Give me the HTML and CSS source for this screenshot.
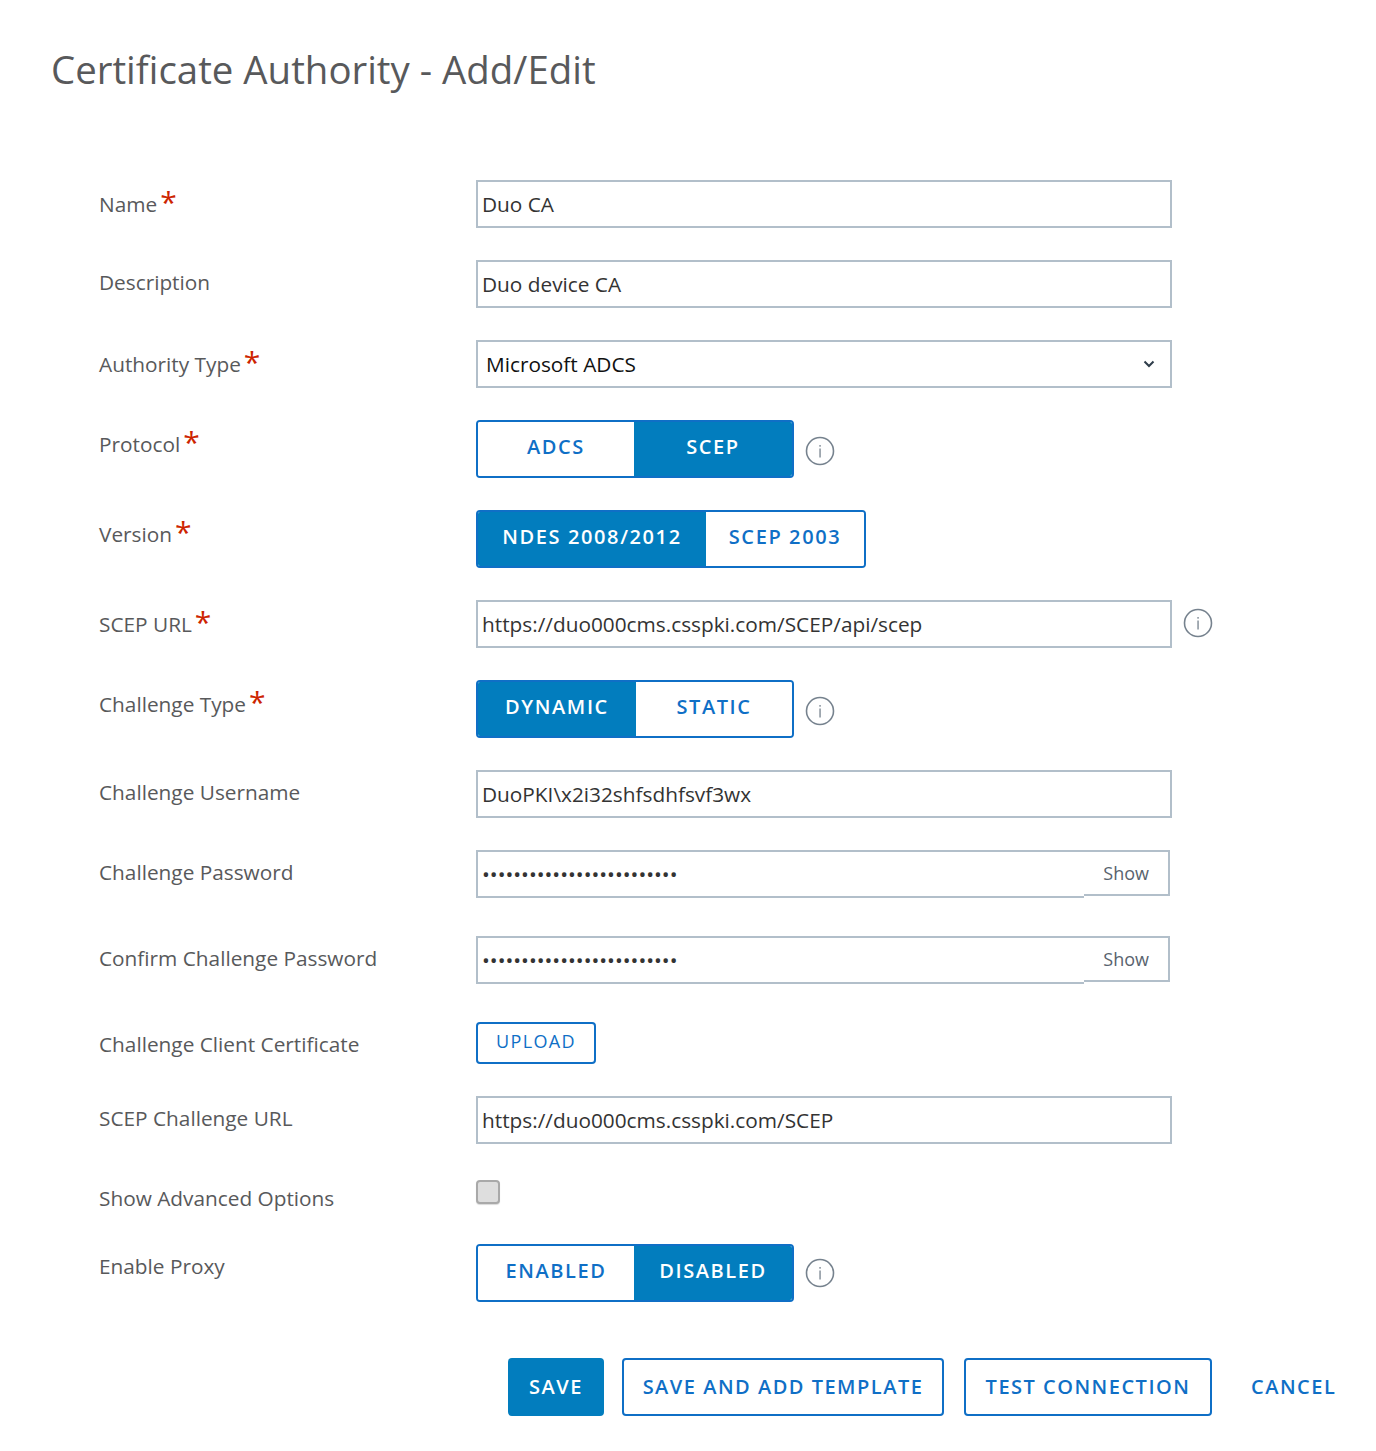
FILE: index.html

```html
<!DOCTYPE html>
<html>
  <head>
    <meta charset="utf-8" />
    <title>Certificate Authority - Add/Edit</title>
    <link rel="stylesheet" href="styles.css">
  </head>
  <body>
    <div class="page">
      <h1 class="title">Certificate Authority - Add/Edit</h1>

      <form class="form" action="" method="">
        <div class="row">
          <label class="label required">Name<span class="star">*</span></label>
          <div class="control"><input class="text-input" type="text" value="Duo CA" /></div>
        </div>

        <div class="row">
          <label class="label">Description</label>
          <div class="control"><input class="text-input" type="text" value="Duo device CA" /></div>
        </div>

        <div class="row">
          <label class="label required">Authority Type<span class="star">*</span></label>
          <div class="control">
            <div class="select">
              <span>Microsoft ADCS</span>
              <svg class="chevron" width="12" height="8" viewBox="0 0 12 8"><path d="M1.5 1.5 L6 6 L10.5 1.5" fill="none" stroke="#2f3d4a" stroke-width="2"/></svg>
            </div>
          </div>
        </div>

        <div class="row">
          <label class="label required">Protocol<span class="star">*</span></label>
          <div class="control">
            <div class="toggle">
              <button class="toggle-btn w-156" type="button">ADCS</button>
              <button class="toggle-btn w-158 on" type="button">SCEP</button>
            </div>
            <svg class="info info-low" width="30" height="30" viewBox="0 0 30 30"><circle cx="15" cy="15" r="13.5" fill="none" stroke="#76828e" stroke-width="1.6"/><rect x="14.4" y="9" width="1.3" height="1.7" fill="#76828e"/><rect x="14.4" y="12.5" width="1.3" height="9" fill="#76828e"/></svg>
          </div>
        </div>

        <div class="row">
          <label class="label required">Version<span class="star">*</span></label>
          <div class="control">
            <div class="toggle">
              <button class="toggle-btn w-228 on" type="button">NDES 2008/2012</button>
              <button class="toggle-btn w-158" type="button">SCEP 2003</button>
            </div>
          </div>
        </div>

        <div class="row">
          <label class="label required">SCEP URL<span class="star">*</span></label>
          <div class="control">
            <input class="text-input" type="text" value="https://duo000cms.csspki.com/SCEP/api/scep" />
            <svg class="info" width="30" height="30" viewBox="0 0 30 30"><circle cx="15" cy="15" r="13.5" fill="none" stroke="#76828e" stroke-width="1.6"/><rect x="14.4" y="9" width="1.3" height="1.7" fill="#76828e"/><rect x="14.4" y="12.5" width="1.3" height="9" fill="#76828e"/></svg>
          </div>
        </div>

        <div class="row">
          <label class="label required">Challenge Type<span class="star">*</span></label>
          <div class="control">
            <div class="toggle">
              <button class="toggle-btn w-158 on" type="button">DYNAMIC</button>
              <button class="toggle-btn w-156" type="button">STATIC</button>
            </div>
            <svg class="info info-low" width="30" height="30" viewBox="0 0 30 30"><circle cx="15" cy="15" r="13.5" fill="none" stroke="#76828e" stroke-width="1.6"/><rect x="14.4" y="9" width="1.3" height="1.7" fill="#76828e"/><rect x="14.4" y="12.5" width="1.3" height="9" fill="#76828e"/></svg>
          </div>
        </div>

        <div class="row">
          <label class="label">Challenge Username</label>
          <div class="control"><input class="text-input" type="text" value="DuoPKI\x2i32shfsdhfsvf3wx" /></div>
        </div>

        <div class="row row-wide">
          <label class="label">Challenge Password</label>
          <div class="control">
            <div class="password">
              <div class="password-dots">•••••••••••••••••••••••••</div>
              <div class="password-show">Show</div>
            </div>
          </div>
        </div>

        <div class="row row-wide">
          <label class="label">Confirm Challenge Password</label>
          <div class="control">
            <div class="password">
              <div class="password-dots">•••••••••••••••••••••••••</div>
              <div class="password-show">Show</div>
            </div>
          </div>
        </div>

        <div class="row">
          <label class="label">Challenge Client Certificate</label>
          <div class="control"><button class="upload" type="button">UPLOAD</button></div>
        </div>

        <div class="row row-36">
          <label class="label">SCEP Challenge URL</label>
          <div class="control"><input class="text-input" type="text" value="https://duo000cms.csspki.com/SCEP" /></div>
        </div>

        <div class="row row-check">
          <label class="label label-check">Show Advanced Options</label>
          <div class="control"><span class="checkbox"></span></div>
        </div>

        <div class="row row-last">
          <label class="label">Enable Proxy</label>
          <div class="control">
            <div class="toggle">
              <button class="toggle-btn w-156" type="button">ENABLED</button>
              <button class="toggle-btn w-158 on" type="button">DISABLED</button>
            </div>
            <svg class="info info-mid" width="30" height="30" viewBox="0 0 30 30"><circle cx="15" cy="15" r="13.5" fill="none" stroke="#76828e" stroke-width="1.6"/><rect x="14.4" y="9" width="1.3" height="1.7" fill="#76828e"/><rect x="14.4" y="12.5" width="1.3" height="9" fill="#76828e"/></svg>
          </div>
        </div>

        <div class="actions">
          <button class="btn btn-primary" type="button">SAVE</button>
          <button class="btn w-322" type="button">SAVE AND ADD TEMPLATE</button>
          <button class="btn w-248" type="button">TEST CONNECTION</button>
          <button class="btn-link" type="button">CANCEL</button>
        </div>
      </form>
    </div>
  </body>
</html>
```

FILE: styles.css

```css
body {
  margin: 0;
  padding: 0;
  background-color: #ffffff;
  font-family: "Open Sans", Arial, sans-serif;
  color: #58595b;
}
button, input {
  font-family: inherit;
}
.page {
  padding: 42px 40px 35px 51px;
}
.title {
  margin: 0;
  font-size: 38.4px;
  line-height: 54px;
  font-weight: 400;
  color: #58595b;
}
.form {
  margin-top: 84px;
  padding-left: 48px;
}
.row {
  display: flex;
  margin-bottom: 32px;
}
.row-wide {
  margin-bottom: 38px;
}
.row-36 {
  margin-bottom: 36px;
}
.row-check {
  margin-bottom: 31px;
}
.row-last {
  margin-bottom: 56px;
}
.label {
  flex: 0 0 377px;
  padding-top: 8px;
  font-size: 20.8px;
  line-height: 29px;
  color: #58595b;
}
.required {
  padding-top: 10px;
}
.label-check {
  padding-top: 4px;
}
.star {
  margin-left: 3px;
  font-size: 30px;
  line-height: 20px;
  color: #cd2400;
  vertical-align: -1px;
}
.control {
  display: flex;
  align-items: flex-start;
}
.text-input {
  box-sizing: border-box;
  width: 696px;
  height: 48px;
  padding: 0 5px 0 4px;
  border: 2px solid #b2bfca;
  font-size: 20.8px;
  color: #333333;
  outline: none;
}
.select {
  box-sizing: border-box;
  display: flex;
  justify-content: space-between;
  align-items: center;
  width: 696px;
  height: 48px;
  padding: 0 15px 0 8px;
  border: 2px solid #b2bfca;
  font-size: 20.8px;
  color: #111111;
}
.chevron {
  display: block;
}
.toggle {
  display: flex;
  box-sizing: border-box;
  height: 58px;
  border: 2px solid #0f6fc6;
  border-radius: 4px;
  overflow: hidden;
}
.toggle-btn {
  height: 54px;
  padding: 0 0 6px 0;
  border: none;
  background-color: #ffffff;
  font-size: 20px;
  font-weight: 600;
  letter-spacing: 1.6px;
  color: #0f6fc6;
}
.toggle-btn.on {
  background-color: #027dbe;
  color: #ffffff;
}
.w-156 {
  width: 156px;
}
.w-158 {
  width: 158px;
}
.w-228 {
  width: 228px;
}
.info {
  margin-left: 11px;
  margin-top: 8px;
}
.info-low {
  margin-top: 16px;
}
.info-mid {
  margin-top: 14px;
}
.password {
  display: flex;
  align-items: flex-start;
  width: 694px;
}
.password-dots {
  box-sizing: border-box;
  width: 608px;
  height: 48px;
  padding-left: 4px;
  border: 2px solid #b2bfca;
  border-right: none;
  font-size: 20.8px;
  line-height: 44px;
  color: #333333;
}
.password-show {
  box-sizing: border-box;
  width: 86px;
  height: 46px;
  padding: 0 19px 0 0;
  border: 2px solid #b2bfca;
  border-left: none;
  text-align: right;
  font-size: 18px;
  line-height: 42px;
  color: #58636e;
}
.upload {
  width: 120px;
  height: 42px;
  padding: 0 0 4px 0;
  border: 2px solid #0f6fc6;
  border-radius: 4px;
  background-color: #ffffff;
  font-size: 18px;
  letter-spacing: 1.4px;
  color: #0f6fc6;
}
.checkbox {
  display: block;
  box-sizing: border-box;
  width: 24px;
  height: 24px;
  border: 2px solid #a9a9a9;
  border-radius: 4px;
  background-color: #dedede;
  box-shadow: 0 1px 1px rgba(0, 0, 0, 0.15);
}
.actions {
  display: flex;
  padding-left: 409px;
}
.btn {
  flex: none;
  height: 58px;
  margin-right: 20px;
  padding: 0 0 1px 0;
  border: 2px solid #0f6fc6;
  border-radius: 4px;
  background-color: #ffffff;
  font-size: 20px;
  font-weight: 600;
  letter-spacing: 1.5px;
  white-space: nowrap;
  color: #0f6fc6;
}
.btn-primary {
  width: 96px;
  margin-right: 18px;
  border-color: #027dbe;
  background-color: #027dbe;
  color: #ffffff;
}
.w-322 {
  width: 322px;
}
.w-248 {
  width: 248px;
}
.btn-link {
  flex: none;
  height: 58px;
  margin-left: 19px;
  padding: 0 0 1px 0;
  border: none;
  background: none;
  font-size: 20px;
  font-weight: 600;
  letter-spacing: 1.5px;
  color: #0f6fc6;
}
```
